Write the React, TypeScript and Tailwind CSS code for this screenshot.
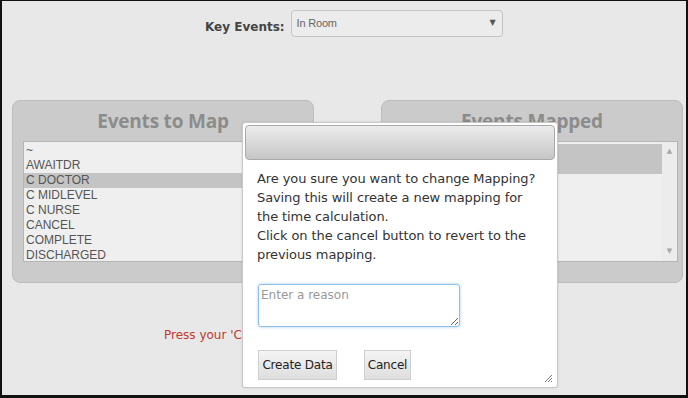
const toMap = ["~", "AWAITDR", "C DOCTOR", "C MIDLEVEL", "C NURSE", "CANCEL", "COMPLETE", "DISCHARGED"];

function Panel({ title, children }: { title: string; children: React.ReactNode }) {
  return (
    <div className="w-[302px] h-[183px] rounded-[8px] border border-[#bdbdbd] bg-[#cbcbcb] flex flex-col">
      <div className="h-[40px] flex items-center justify-center text-[19px] font-bold text-[#8c8c8c] font-['Open_Sans',sans-serif] tracking-[-0.2px]">
        {title}
      </div>
      <div className="ml-[10px] mr-[4px] h-[121px] bg-[#efefef] border border-[#b5b5b5] flex">{children}</div>
    </div>
  );
}

function Scrollbar() {
  return (
    <div className="w-[15px] h-full bg-[#ececec] flex flex-col justify-between items-center py-[6px] text-[#a8a8a8] text-[7px] leading-none">
      <span>▲</span>
      <span>▼</span>
    </div>
  );
}

export default function App() {
  return (
    <div className="relative w-[688px] h-[398px] bg-[#e8e8e8] border-l-2 border-t border-b-[3px] border-r-2 border-[#111] overflow-hidden font-['DejaVu_Sans',sans-serif]">
      <div className="flex items-center pl-[203px] pt-[9px]">
        <span className="text-[12px] font-bold text-[#444] mr-[6px] mt-[6px]">Key Events:</span>
        <div className="w-[212px] h-[27px] rounded-[4px] border border-[#c4c4c4] bg-[#ececec] flex justify-between items-start pl-[5px] pr-[6px] pt-[4px]">
          <span className="text-[11px] text-[#666] font-['Liberation_Sans',sans-serif] tracking-[-0.2px]">In Room</span>
          <span className="text-[8px] text-[#555] mt-[2px]">▼</span>
        </div>
      </div>

      <div className="flex gap-[67px] pl-[10px] mt-[63px]">
        <Panel title="Events to Map">
          <ul className="flex-1 pt-[1px] text-[12px] leading-[15px] text-[#555] font-['Liberation_Sans',sans-serif]">
            {toMap.map((e) => (
              <li key={e} className={`pl-[2px] ${e === "C DOCTOR" ? "bg-[#c4c4c4]" : ""}`}>
                {e}
              </li>
            ))}
          </ul>
          <Scrollbar />
        </Panel>
        <Panel title="Events Mapped">
          <div className="flex-1 pt-[2px]">
            <div className="h-[30px] bg-[#c4c4c4]" />
          </div>
          <Scrollbar />
        </Panel>
      </div>

      <p className="pl-[162px] mt-[43px] text-[12px] text-[#c0392b]">
        Press your 'Create Data' button to save the new mapping.
      </p>

      <div className="absolute left-[240px] top-[121px] w-[316px] h-[266px] bg-white border border-[#c8c8c8] rounded-[3px] shadow-[0_0_2px_rgba(0,0,0,0.15)] flex flex-col">
        <div className="m-[2px] h-[35px] rounded-[4px] border border-[#a9a9a9] bg-gradient-to-b from-[#ececec] to-[#c6c6c6]" />
        <div className="px-[14px] pt-[7px] text-[13px] leading-[19px] text-[#333] tracking-[-0.1px]">
          <p>Are you sure you want to change Mapping?</p>
          <p>Saving this will create a new mapping for</p>
          <p>the time calculation.</p>
          <p>Click on the cancel button to revert to the</p>
          <p>previous mapping.</p>
        </div>
        <textarea
          placeholder="Enter a reason"
          className="ml-[15px] mt-[20px] w-[202px] h-[43px] rounded-[3px] border border-[#8cc0ec] shadow-[0_0_3px_rgba(80,150,220,0.5)] px-[2px] py-[1px] text-[12px] text-[#333] placeholder:text-[#999] outline-none resize-y"
        />
        <div className="flex gap-[27px] ml-[15px] mt-[23px]">
          <button className="w-[79px] h-[30px] border border-[#cfcfcf] bg-gradient-to-b from-[#f4f4f4] to-[#dedede] text-[12px] text-[#222] tracking-[-0.2px]">
            Create Data
          </button>
          <button className="w-[47px] h-[30px] border border-[#cfcfcf] bg-gradient-to-b from-[#f4f4f4] to-[#dedede] text-[12px] text-[#222] tracking-[-0.2px]">
            Cancel
          </button>
        </div>
        <svg className="absolute right-[4px] bottom-[4px]" width="10" height="10" viewBox="0 0 10 10">
          <path d="M9 2 L2 9 M9 5 L5 9 M9 8 L8 9" stroke="#777" strokeWidth="1" />
        </svg>
      </div>
    </div>
  );
}
